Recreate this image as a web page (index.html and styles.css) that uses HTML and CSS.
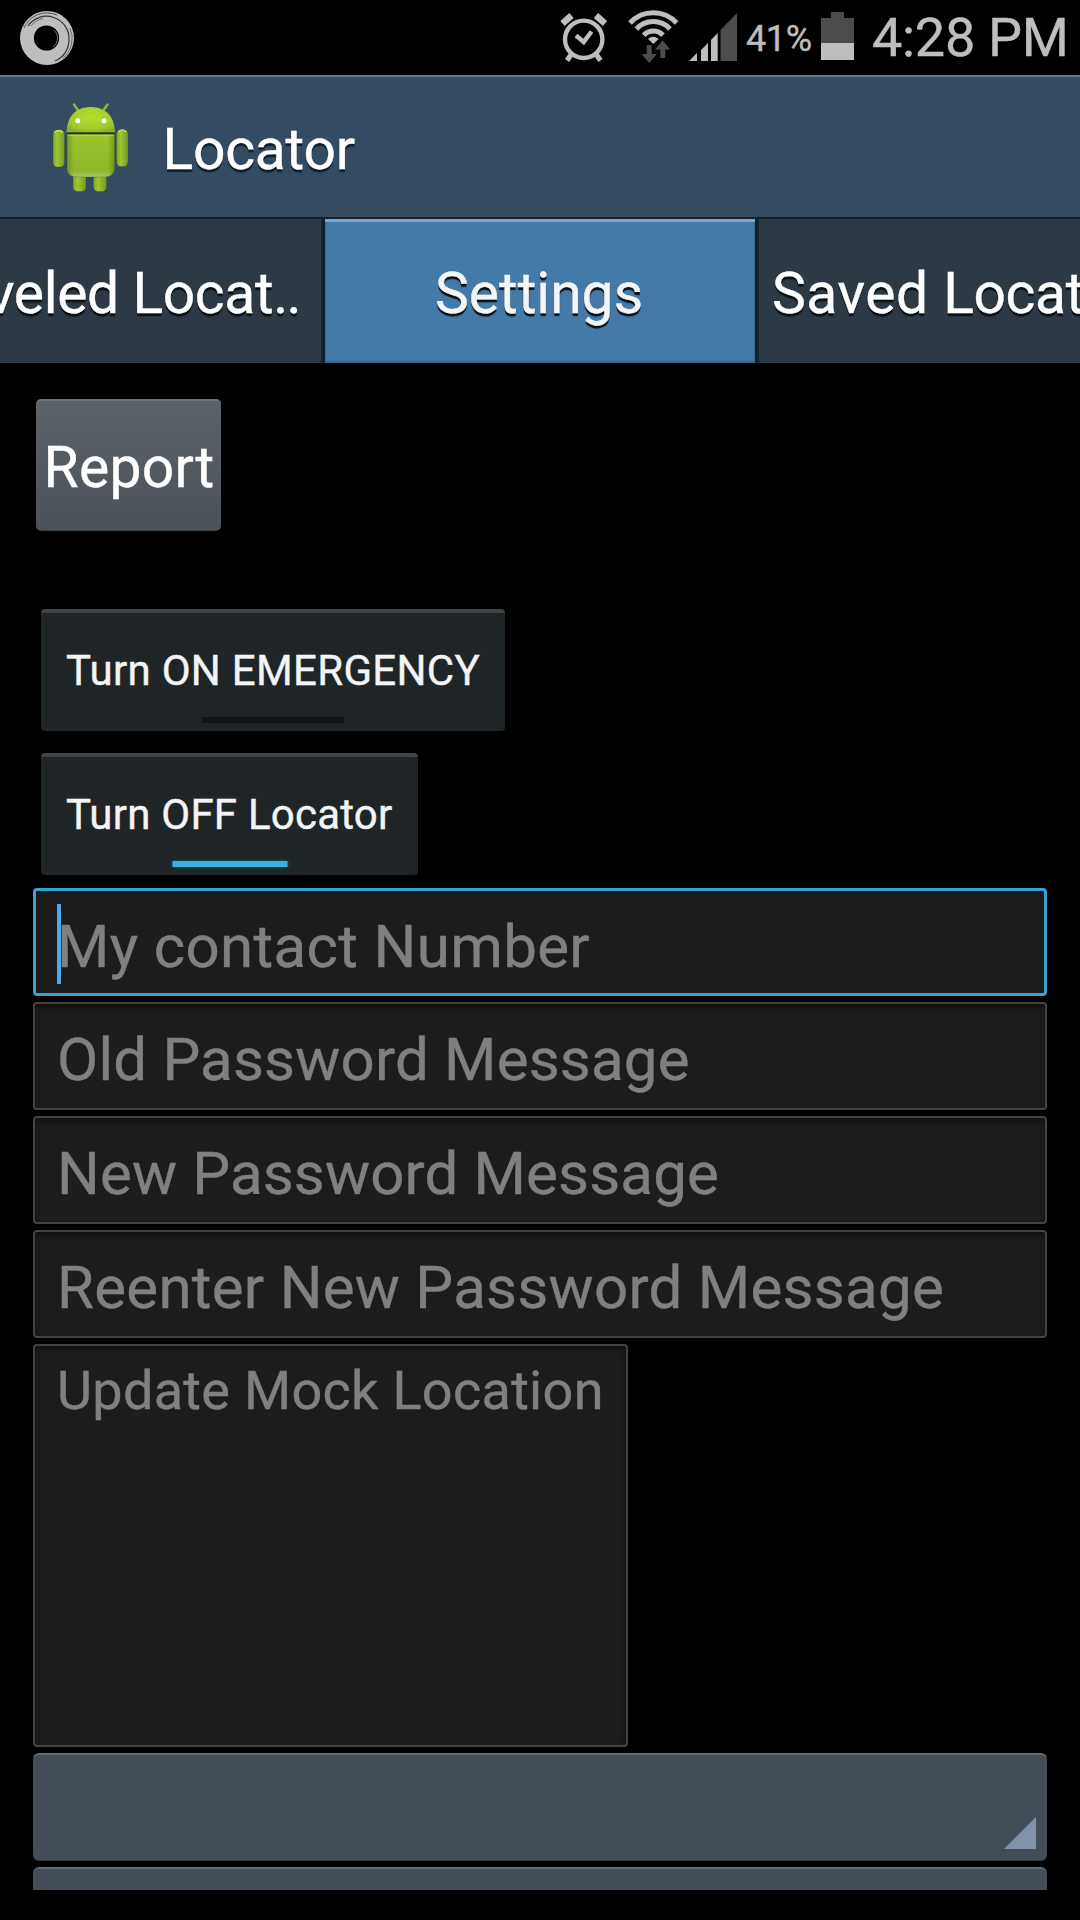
FILE: index.html
```html
<!DOCTYPE html>
<html lang="en">
<head>
<meta charset="utf-8">
<title>Locator</title>
<link rel="stylesheet" href="styles.css">
</head>
<body>
<div class="screen">
  <header class="status-bar">
    <svg class="ring-icon" viewBox="0 0 56 56">
      <circle cx="28" cy="28" r="27" fill="#bebebe"/>
      <circle cx="27.500" cy="28" r="12.600" fill="#000"/>
      <g fill="none" stroke="#333" stroke-width=".8">
        <path d="M5 18A25 25 0 0 1 38 5"/>
        <path d="M9 16A22.500 22.500 0 0 1 50 30A23 23 0 0 1 36 51" stroke-width="1.200"/>
        <path d="M12 16A20 20 0 0 1 24 8.500" stroke-width=".6"/>
        <path d="M51 18A25.500 25.500 0 0 1 44 48" stroke-width=".6"/>
      </g>
      <path d="M35 20A11 11 0 0 1 34 37" fill="none" stroke="#777" stroke-width="1"/>
    </svg>
    <div class="status-icons">
      <svg class="alarm-icon" viewBox="559 10 50 54" fill="none" stroke="#bebebe">
        <circle cx="583.700" cy="39.300" r="18.700" stroke-width="4.400"/>
        <path d="M562.500 23.500L571.500 15.500M605 23.500L596 15.500" stroke-width="6.500"/>
        <path d="M571.500 54L567 60.500M596 54L600.500 60.500" stroke-width="5"/>
        <path d="M576 35.500L583.700 42L591.500 31.500" stroke-width="4.400"/>
      </svg>
      <svg class="wifi-icon" viewBox="627 8 52 58">
        <g fill="none" stroke="#bebebe" stroke-width="5">
          <path d="M630 23A31.500 31.500 0 0 1 676.600 23"/>
          <path d="M636.500 29A22.700 22.700 0 0 1 670 29"/>
          <path d="M643.700 35.300A13.200 13.200 0 0 1 663 35.300"/>
        </g>
        <path d="M653.300 44L648 39Q653.300 34.500 658.600 39Z" fill="#bebebe"/>
        <path d="M646.700 45H651.700V54H657L649.300 63L641.500 54H646.700ZM660.300 58V49.500H655L662.600 40.300L670.300 49.500H665.200V58Z" fill="#4c4c4c"/>
      </svg>
      <svg class="signal-icon" viewBox="689 12 49 50">
        <path d="M689 61L697 53V61ZM701 61V50L708 43V61ZM711 61V40L717.700 33V61Z" fill="#bebebe"/>
        <path d="M720.500 61V30L737 13V61Z" fill="#4c4c4c"/>
      </svg>
      <span class="battery-level">41%</span>
      <svg class="battery-icon" viewBox="821 12 33 48">
        <path d="M821 18H831V12H844V18H854V43H821Z" fill="#4c4c4c"/>
        <path d="M821 43H854V60H821Z" fill="#bebebe"/>
      </svg>
      <span class="clock">4:28 PM</span>
    </div>
  </header>

  <div class="action-bar">
    <svg class="app-icon" viewBox="50 100 82 94">
      <defs>
        <linearGradient id="body" x1="0" y1="0" x2="0" y2="1">
          <stop offset="0" stop-color="#9dc42c"/><stop offset=".85" stop-color="#90b72b"/><stop offset="1" stop-color="#a9c468"/>
        </linearGradient>
        <radialGradient id="head" cx=".5" cy=".4" r=".65">
          <stop offset="0" stop-color="#b5e02c"/><stop offset=".7" stop-color="#a2cc2b"/><stop offset="1" stop-color="#8bb129"/>
        </radialGradient>
        <linearGradient id="side" x1="0" y1="0" x2="1" y2="0">
          <stop offset="0" stop-color="#587b18" stop-opacity=".55"/><stop offset=".14" stop-color="#587b18" stop-opacity="0"/><stop offset=".86" stop-color="#587b18" stop-opacity="0"/><stop offset="1" stop-color="#587b18" stop-opacity=".55"/>
        </linearGradient>
        <linearGradient id="limb" x1="0" y1="0" x2="1" y2="0">
          <stop offset="0" stop-color="#7fa526"/><stop offset=".35" stop-color="#a0c731"/><stop offset="1" stop-color="#769a24"/>
        </linearGradient>
      </defs>
      <g stroke="#314425" stroke-opacity=".35" stroke-width=".8">
        <rect x="73" y="168" width="13" height="22.500" rx="4.500" fill="url(#limb)"/>
        <rect x="93.500" y="168" width="13" height="22.500" rx="4.500" fill="url(#limb)"/>
        <rect x="53" y="129" width="11.500" height="37" rx="4.500" fill="url(#limb)"/>
        <rect x="116.500" y="129" width="11.500" height="36.500" rx="4.500" fill="url(#limb)"/>
        <path d="M67 133H114.500V167Q114.500 176 104 176H77.500Q67 176 67 167Z" fill="url(#body)"/>
      </g>
      <path d="M67 133H114.500V167Q114.500 176 104 176H77.500Q67 176 67 167Z" fill="url(#side)"/>
      <path d="M74 103.500L78.500 110M107.500 103.500L103 110" stroke="#8fb52d" stroke-width="2.600" stroke-linecap="round"/>
      <path d="M66.500 131.500C67 114 77 106 90.700 106S114.500 114 115 131.500Z" fill="url(#head)"/>
      <path d="M54.500 131.500Q58.700 127.500 63 131.500M118 131Q122.200 127 126.500 131" fill="none" stroke="#c0e45a" stroke-width="1.500"/>
      <path d="M67 132.300H114.500" stroke="#26330d" stroke-width="1.800"/>
      <path d="M68 134.300H113.500" stroke="#b4d94a" stroke-width="1"/>
      <circle cx="77.800" cy="119.800" r="2.500" fill="#fff"/>
      <circle cx="104" cy="119.800" r="2.500" fill="#fff"/>
    </svg>
    <h1 class="title">Locator</h1>
  </div>

  <nav class="tabs">
    <div class="tab tab-left"><span>Traveled Locat<span class="dots">..</span></span></div>
    <div class="tab tab-active"><span>Settings</span></div>
    <div class="tab tab-right"><span><span class="saved">Saved </span>Locat..</span></div>
  </nav>

  <main class="content">
    <div class="report">Report</div>
    <div class="toggle emergency">Turn ON EMERGENCY</div>
    <div class="toggle locator">Turn OFF Locator</div>
    <div class="fields">
      <div class="field focused"><i class="cursor"></i><span class="contact">My contact Number</span></div>
      <div class="field"><span class="old">Old Password Message</span></div>
      <div class="field"><span class="new">New Password Message</span></div>
      <div class="field"><span class="reenter">Reenter New Password Message</span></div>
      <div class="field area"><span>Update Mock Location</span></div>
      <div class="spinner"><svg class="corner" viewBox="0 0 32 32"><path d="M32 0V32H0Z"/></svg></div>
      <div class="spinner cut"></div>
    </div>
  </main>
</div>
</body>
</html>
```
FILE: styles.css
```css
* { box-sizing: border-box; }
body { margin: 0; background: #000; font-family: Roboto, sans-serif; color: #fff; -webkit-text-stroke: .4px currentColor; }
.screen { width: 1080px; height: 1920px; overflow: hidden; display: flex; flex-direction: column; background: #000; }

.status-bar { height: 75px; flex: none; display: flex; justify-content: space-between; color: #bebebe; }
.ring-icon { width: 56px; height: 56px; margin: 10px 0 0 19px; }
.status-icons { display: flex; align-items: flex-start; width: 521px; }
.status-icons > * { flex: none; }
.alarm-icon { width: 50px; height: 54px; margin-top: 10px; }
.wifi-icon { width: 52px; height: 58px; margin: 8px 0 0 18px; }
.signal-icon { width: 49px; height: 50px; margin: 12px 0 0 10px; }
.battery-level { width: 75px; margin: 18px 0 0 8px; font-size: 36px; line-height: 43px; letter-spacing: -.4px; }
.battery-icon { width: 33px; height: 48px; margin-top: 12px; }
.clock { margin: 5px 0 0 18px; font-size: 54px; line-height: 65px; letter-spacing: -.3px; white-space: nowrap; }

.action-bar { height: 144px; flex: none; display: flex; align-items: flex-start; background: #354b61; border-top: 2px solid #62758b; border-bottom: 2px solid #14222f; padding-left: 50px; }
.app-icon { width: 82px; height: 94px; margin-top: 24px; }
.title { margin: 38px 0 0 30.5px; font-size: 57px; line-height: 70px; font-weight: 400; letter-spacing: -.25px; text-shadow: 0 3px 1px #101c28; }

.tabs { height: 144px; flex: none; display: flex; background: #2d3a45; }
.tab { display: flex; align-items: center; white-space: nowrap; overflow: hidden; font-size: 57px; line-height: 70px; padding-top: 6px; text-shadow: 0 3px 1px #081016; }
.tab-left { width: 321px; justify-content: flex-end; padding-right: 21px; letter-spacing: -.4px; }
.dots { letter-spacing: -1.600px; }
.tab-active { width: 438px; justify-content: center; padding: 0 2px 0 0; color: #f4f5f7; background: #437aa8; border: solid #12222f; border-width: 0 4px; box-shadow: inset 0 3px #7fa6c8, inset 0 -2px #38658b, inset 1px 0 #38658b, inset -1px 0 #38658b; }
.tab-active span { padding-top: 6px; }
.tab-right { width: 321px; padding-left: 13px; letter-spacing: -.4px; }
.saved { letter-spacing: .5px; }

.content { height: 1527px; flex: none; overflow: hidden; display: flex; flex-direction: column; align-items: flex-start; padding: 36px 33px 0; }
.report { width: 185px; height: 132px; margin-left: 3px; padding: 32px 0 0 7.5px; font-size: 57px; line-height: 70px; letter-spacing: .3px; border-radius: 5px; background: linear-gradient(#5b6268, #4c5259); border-top: 2px solid #6d7379; border-bottom: 1px solid #3d4247; white-space: nowrap; }
.toggle { position: relative; height: 122px; margin-left: 8px; padding: 33px 0 0 25px; font-size: 42px; line-height: 50px; color: #f3f4f5; background: #1f2427; border-top: 4px solid #424446; border-radius: 4px; white-space: nowrap; }
.toggle::after { content: ""; position: absolute; bottom: 8px; left: 50%; height: 6px; transform: translateX(-50%); background: #101417; }
.emergency { width: 464px; margin-top: 78px; letter-spacing: .31px; }
.emergency::after { width: 142px; }
.locator { width: 377px; margin-top: 22px; letter-spacing: .23px; }
.locator::after { width: 115px; background: #37b0e0; box-shadow: 0 0 3px #1b6f91; }

.fields { width: 1014px; margin-top: 13px; display: flex; flex-direction: column; gap: 6px; }
.field { position: relative; height: 108px; flex: none; padding: 20px 0 0 22px; border: 2px solid #434343; border-radius: 4px; background: #1c1c1c; box-shadow: inset 0 3px 5px #111; color: #808080; font-size: 60px; line-height: 72px; white-space: nowrap; }
.focused { border: 3px solid #3aa2d0; padding: 20px 0 0 21px; box-shadow: inset 0 2px 1px #101d2a; }
.cursor { position: absolute; left: 21px; top: 13px; width: 4px; height: 80px; background: #54a7e8; }
.contact { letter-spacing: .36px; }
.old { letter-spacing: .2px; }
.new { letter-spacing: .16px; }
.reenter { letter-spacing: .28px; }
.area { width: 595px; height: 403px; padding-top: 12px; font-size: 54px; line-height: 66px; letter-spacing: .3px; }
.spinner { height: 108px; flex: none; display: flex; justify-content: flex-end; align-items: flex-end; padding: 0 11px 11px 0; background: #434d57; border-top: 2px solid #626b73; border-bottom: 1px solid #30383f; border-radius: 6px; }
.corner { width: 32px; height: 32px; fill: #8093a8; }
.cut { height: 23px; border-bottom: 0; border-radius: 6px 6px 0 0; }
```
